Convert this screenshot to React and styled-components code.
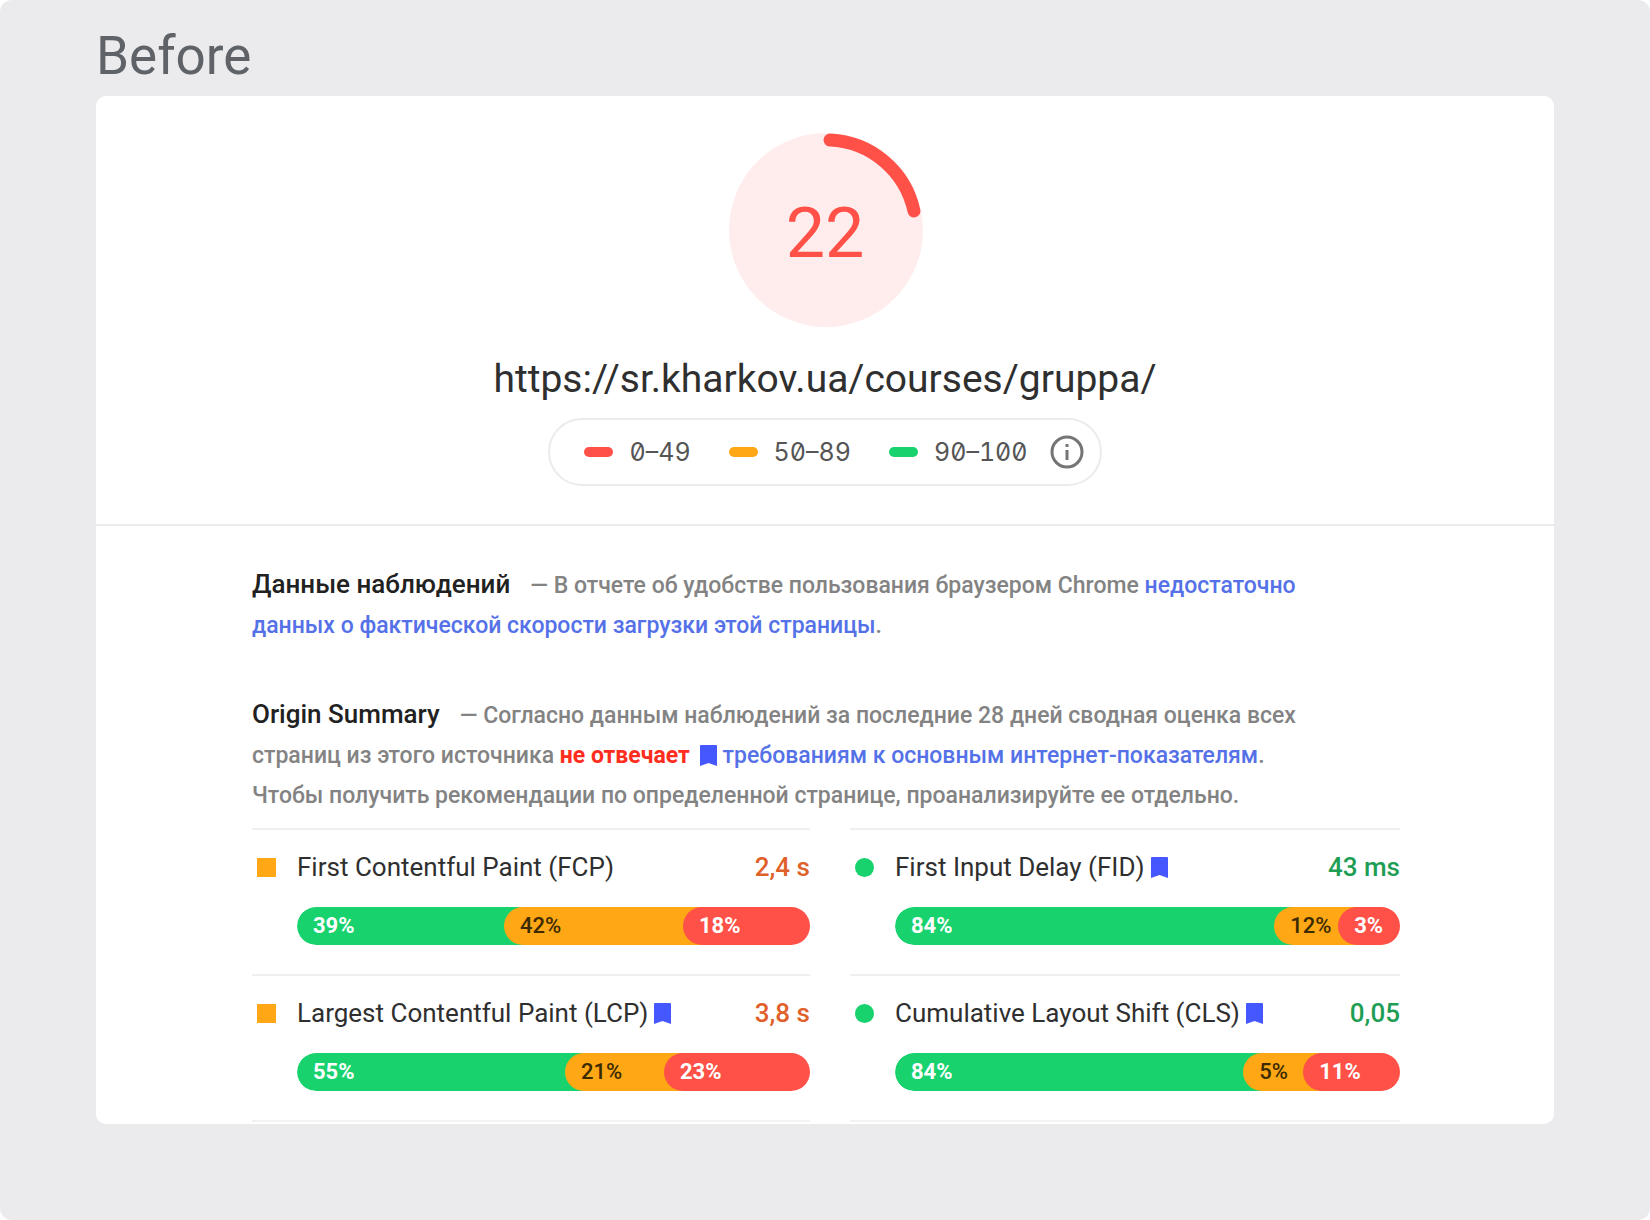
import React from 'react'
import styled, { createGlobalStyle } from 'styled-components'

const colors = {
  good: '#18d26e',
  average: '#ffa715',
  poor: '#ff5147',
}

const GlobalStyle = createGlobalStyle`
  * { box-sizing: border-box; }
  body {
    margin: 0;
    background: #fff;
    font-family: Roboto, "Noto Sans", sans-serif;
    color: #2f2f2f;
  }
`

const Page = styled.main`
  min-height: 100vh;
  padding: 24px 96px 96px;
  background: #ebebed;
  border-radius: 12px;
`
const PageTitle = styled.h1`
  margin: 0 0 8px;
  font-size: 53px;
  font-weight: 400;
  line-height: 64px;
  color: #5f6368;
`
const Card = styled.section`
  background: #fff;
  border-radius: 10px;
  overflow: hidden;
`
const Header = styled.header`
  display: flex;
  flex-direction: column;
  align-items: center;
  padding: 36px 16px 38px;
  border-bottom: 2px solid #ebebeb;
`
const Gauge = styled.div`
  display: grid;
  width: 196px;
  height: 196px;
  > * { grid-area: 1 / 1; }
`
const Score = styled.span`
  place-self: center;
  padding-top: 6px;
  font-size: 70px;
  font-weight: 400;
  line-height: 80px;
  color: ${colors.poor};
`
const Url = styled.h2`
  margin: 24px 0 12px;
  font-size: 39px;
  font-weight: 400;
  line-height: 54px;
`
const Legend = styled.div`
  display: flex;
  align-items: center;
  gap: 22px;
  height: 68px;
  padding: 0 16px 0 34px;
  border: 2px solid #ebebeb;
  border-radius: 34px;
`
const Ranges = styled.ul`
  display: flex;
  gap: 38px;
  margin: 0;
  padding: 0;
  list-style: none;
`
const Range = styled.li`
  display: flex;
  align-items: center;
  gap: 16px;
  font-family: Inter, "Liberation Mono", monospace;
  font-feature-settings: "zero", "tnum";
  font-size: 25px;
  line-height: 32px;
  color: #555;
  &::before {
    content: "";
    width: 29px;
    height: 10px;
    border-radius: 5px;
    background: ${p => colors[p.$level]};
  }
`
const InfoButton = styled.button`
  display: flex;
  padding: 0;
  border: 0;
  background: none;
  color: #757575;
  cursor: pointer;
`
const Content = styled.div`
  padding: 38px 154px 2px 156px;
`
const Paragraph = styled.p`
  margin: 0 0 48px;
  font-size: 23px;
  font-weight: 500;
  line-height: 40px;
  color: #838383;
  & + & { margin-bottom: 12px; }
`
const Heading = styled.strong`
  margin-right: 20px;
  font-size: 26px;
  font-weight: 500;
  color: #212121;
`
const Link = styled.a`
  color: #5571e8;
  text-decoration: none;
`
const Fail = styled.strong`
  margin-right: 10px;
  font-weight: 700;
  color: #ff2d20;
`
const Metrics = styled.div`
  display: grid;
  grid-template-columns: 558fr 550fr;
  column-gap: 40px;
`
const Metric = styled.article`
  display: grid;
  grid-template-columns: 45px 1fr auto;
  align-items: center;
  row-gap: 19px;
  padding: 16px 0 29px;
  border-top: 2px solid #efefef;
`
const Marker = styled.span`
  width: 19px;
  height: 19px;
  margin-left: 5px;
  border-radius: ${p => (p.$level === 'good' ? '50%' : '0')};
  background: ${p => colors[p.$level]};
`
const Name = styled.h3`
  display: flex;
  align-items: center;
  gap: 6px;
  margin: 0;
  font-size: 26px;
  font-weight: 400;
  line-height: 42px;
`
const Value = styled.span`
  font-size: 26px;
  font-weight: 500;
  color: ${p => (p.$level === 'good' ? '#1e9e55' : '#e0602a')};
`
const Bar = styled.div`
  grid-column: 2 / -1;
  display: flex;
  height: 38px;
  border-radius: 19px;
  overflow: hidden;
`
// each segment runs 20px under the rounded start of the next one
const Segment = styled.div`
  box-sizing: content-box;
  flex: ${p => p.$size} 1 0;
  min-width: 0;
  padding-right: 20px;
  margin-right: -20px;
  border-radius: 19px 0 0 19px;
  background: ${p => colors[p.$level]};
  color: ${p => (p.$level === 'average' ? '#3c2a00' : '#fff')};
  font-size: 22px;
  font-weight: ${p => (p.$level === 'average' ? 500 : 700)};
  line-height: 38px;
  text-indent: 16px;
`
const BottomLine = styled.div`
  border-top: 2px solid #f2f2f2;
`

const BookmarkSvg = styled.svg`
  flex: none;
  vertical-align: -3px;
`

const Bookmark = () => (
  <BookmarkSvg width="17" height="21" viewBox="0 0 17 21" aria-hidden="true">
    <path d="M1 0h15a1 1 0 0 1 1 1v20l-8.500-3L0 21V1a1 1 0 0 1 1-1z" fill="#4557ff" />
  </BookmarkSvg>
)

const metrics = [
  { name: 'First Contentful Paint (FCP)', value: '2,4 s', level: 'average', sizes: [207, 179, 127], labels: [39, 42, 18] },
  { name: 'First Input Delay (FID)', value: '43 ms', level: 'good', core: true, sizes: [380, 64, 62], labels: [84, 12, 3] },
  { name: 'Largest Contentful Paint (LCP)', value: '3,8 s', level: 'average', core: true, sizes: [268, 99, 146], labels: [55, 21, 23] },
  { name: 'Cumulative Layout Shift (CLS)', value: '0,05', level: 'good', core: true, sizes: [349, 60, 97], labels: [84, 5, 11] },
]
const levels = ['good', 'average', 'poor']

function App() {
  return (
    <>
      <GlobalStyle />
      <Page>
        <PageTitle>Before</PageTitle>
        <Card>
          <Header>
            <Gauge>
              <svg width="196" height="196" viewBox="0 0 196 196" aria-hidden="true">
                <circle cx="99" cy="98" r="97" fill="#ffeded" />
                <path d="M103 8A90 90 0 0 1 187 79" fill="none" stroke={colors.poor} strokeWidth="13" strokeLinecap="round" />
              </svg>
              <Score>22</Score>
            </Gauge>
            <Url>https://sr.kharkov.ua/courses/gruppa/</Url>
            <Legend>
              <Ranges>
                <Range $level="poor">0–49</Range>
                <Range $level="average">50–89</Range>
                <Range $level="good">90–100</Range>
              </Ranges>
              <InfoButton aria-label="Info">
                <svg width="34" height="34" viewBox="0 0 34 34" fill="none" stroke="currentColor" strokeWidth="3">
                  <circle cx="17" cy="17" r="15" />
                  <path d="M17 15v10M17 9v3" />
                </svg>
              </InfoButton>
            </Legend>
          </Header>
          <Content>
            <Paragraph>
              <Heading>Данные наблюдений</Heading>
              — В отчете об удобстве пользования браузером Chrome{' '}
              <Link href="#data">
                недостаточно
                <br />
                данных о фактической скорости загрузки этой страницы
              </Link>
              .
            </Paragraph>
            <Paragraph>
              <Heading>Origin Summary</Heading>
              — Согласно данным наблюдений за последние 28 дней сводная оценка всех
              <br />
              страниц из этого источника <Fail>не отвечает</Fail>
              <Bookmark /> <Link href="#vitals">требованиям к основным интернет-показателям</Link>.
              <br />
              Чтобы получить рекомендации по определенной странице, проанализируйте ее отдельно.
            </Paragraph>
            <Metrics>
              {metrics.map(m => (
                <Metric key={m.name}>
                  <Marker $level={m.level} />
                  <Name>
                    {m.name}
                    {m.core && <Bookmark />}
                  </Name>
                  <Value $level={m.level}>{m.value}</Value>
                  <Bar>
                    {levels.map((level, i) => (
                      <Segment key={level} $level={level} $size={m.sizes[i]}>
                        {m.labels[i]}%
                      </Segment>
                    ))}
                  </Bar>
                </Metric>
              ))}
              <BottomLine />
              <BottomLine />
            </Metrics>
          </Content>
        </Card>
      </Page>
    </>
  )
}

export default App
